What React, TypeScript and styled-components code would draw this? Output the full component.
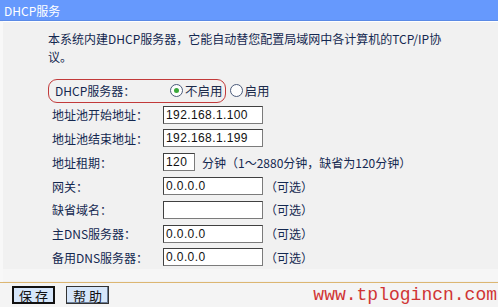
import styled, { createGlobalStyle } from "styled-components";

const GlobalStyle = createGlobalStyle`
  html, body {
    margin: 0;
    padding: 0;
    background: #f1f1f1;
  }
`;

const FONT = `"Noto Sans CJK SC", "Noto Sans", sans-serif`;
const TEXT = "#142850";

const Page = styled.div`
  width: 498px;
  height: 307px;
  display: flex;
  flex-direction: column;
  background: #f1f1f1;
  font-family: ${FONT};
  font-size: 12px;
  color: ${TEXT};
  overflow: hidden;
`;

const Header = styled.div`
  height: 20px;
  background: #6699fd;
  border-bottom: 1px solid #5b8ae6;
  box-shadow: 0 1px 0 #ffffff;
  display: flex;
  align-items: center;
  padding-left: 4px;
  color: #ffffff;
  font-size: 12px;
  flex-shrink: 0;
`;

const Body = styled.div`
  flex: 1;
  padding: 9px 0 0 45px;
  border-left: 3px solid #f8f8f8;
`;

const Intro = styled.p`
  margin: 0;
  width: 400px;
  line-height: 18px;
`;

const Form = styled.div`
  margin-top: 13px;
  display: flex;
  flex-direction: column;
`;

const Row = styled.div`
  height: 23.8px;
  display: flex;
  align-items: center;
  padding-left: 4px;
`;

const Highlight = styled.div`
  height: 22px;
  margin-left: -4px;
  padding-left: 6px;
  padding-right: 2px;
  display: flex;
  align-items: center;
  border: 1px solid #c23a3a;
  border-radius: 9px;
`;

const Label = styled.span`
  width: 111px;
  flex-shrink: 0;
  white-space: nowrap;
`;

const Option = styled.label<{ $gap?: number }>`
  display: flex;
  align-items: center;
  gap: 2px;
  margin-left: ${(p) => p.$gap ?? 0}px;
`;

const Radio = styled.span<{ $checked?: boolean }>`
  width: 11px;
  height: 11px;
  border-radius: 50%;
  border: 1px solid #4a5a7a;
  background: #fdfdfd;
  display: grid;
  place-items: center;
  &::after {
    content: "";
    width: 5px;
    height: 5px;
    border-radius: 50%;
    background: ${(p) => (p.$checked ? "#3aa83a" : "transparent")};
  }
`;

const OptionText = styled.span`
  font-size: 12.5px;
  color: #1b2a4a;
`;

const Input = styled.div<{ $w?: number }>`
  width: ${(p) => p.$w ?? 100}px;
  height: 18px;
  box-sizing: border-box;
  background: #ffffff;
  border: 1px solid #7b7b7b;
  border-top-color: #404040;
  border-left-color: #404040;
  font-family: "Liberation Sans", Arial, sans-serif;
  font-size: 12px;
  letter-spacing: 0.4px;
  color: #111;
  padding-left: 2px;
  line-height: 16px;
  flex-shrink: 0;
`;

const Note = styled.span<{ $gap?: number }>`
  margin-left: ${(p) => p.$gap ?? 2}px;
  white-space: nowrap;
`;

const Spacer = styled.div`
  height: 12px;
  background: #f6f6f6;
  margin-left: -45px;
`;

const Footer = styled.div`
  height: 24px;
  border-top: 1px solid #dcb672;
  background: #f4f4f4;
  display: flex;
  align-items: center;
  padding-left: 12px;
  gap: 11px;
  flex-shrink: 0;
`;

const Button = styled.button<{ $focus?: boolean }>`
  width: 43px;
  height: 18px;
  padding: 0;
  box-sizing: border-box;
  background: #d6e6fa;
  border: ${(p) => (p.$focus ? "2px solid #111" : "1px solid #333")};
  box-shadow: ${(p) => (p.$focus ? "none" : "inset -1px -1px 0 #6a7c96")};
  font-family: ${FONT};
  font-size: 13px;
  color: #111;
  white-space: pre;
  line-height: 1;
`;

const Watermark = styled.span`
  margin-left: auto;
  margin-right: 1px;
  font-family: "Liberation Mono", "Courier New", monospace;
  font-size: 18px;
  color: #d03434;
`;

const rows = [
  { label: "地址池开始地址：", value: "192.168.1.100" },
  { label: "地址池结束地址：", value: "192.168.1.199" },
];

const optional = [
  { label: "网关：", value: "0.0.0.0" },
  { label: "缺省域名：", value: "" },
  { label: "主DNS服务器：", value: "0.0.0.0" },
  { label: "备用DNS服务器：", value: "0.0.0.0" },
];

export default function App() {
  return (
    <Page>
      <GlobalStyle />
      <Header>DHCP服务</Header>
      <Body>
        <Intro>
          本系统内建DHCP服务器，它能自动替您配置局域网中各计算机的TCP/IP协议。
        </Intro>
        <Form>
          <Row>
            <Highlight>
              <Label>DHCP服务器：</Label>
              <Option $gap={4}>
                <Radio $checked />
                <OptionText>不启用</OptionText>
              </Option>
            </Highlight>
            <Option $gap={4}>
              <Radio />
              <OptionText>启用</OptionText>
            </Option>
          </Row>
          {rows.map((r) => (
            <Row key={r.label}>
              <Label>{r.label}</Label>
              <Input>{r.value}</Input>
            </Row>
          ))}
          <Row>
            <Label>地址租期：</Label>
            <Input $w={32}>120</Input>
            <Note $gap={7}>分钟（1～2880分钟，缺省为120分钟）</Note>
          </Row>
          {optional.map((r) => (
            <Row key={r.label}>
              <Label>{r.label}</Label>
              <Input>{r.value}</Input>
              <Note>（可选）</Note>
            </Row>
          ))}
        </Form>
        <Spacer />
      </Body>
      <Footer>
        <Button $focus>保 存</Button>
        <Button>帮 助</Button>
        <Watermark>www.tplogincn.com</Watermark>
      </Footer>
    </Page>
  );
}
